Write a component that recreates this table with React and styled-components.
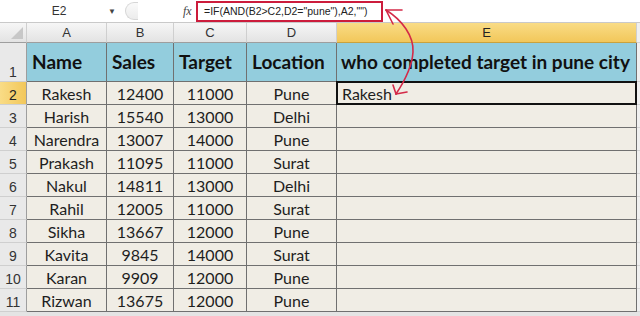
import React from 'react';
import styled, { createGlobalStyle, css } from 'styled-components';

const Global = createGlobalStyle`
    html, body {
        margin: 0;
        padding: 0;
        background: #ffffff;
        overflow: hidden;
    }
    body {
        font-family: Lato, "Open Sans", sans-serif;
    }
`;

const Page = styled.div`
    position: relative;
    width: 640px;
    height: 316px;
    background: #e4e4e4;
`;

const FormulaBar = styled.div`
    display: flex;
    align-items: center;
    height: 23px;
    background: #ffffff;
    border-bottom: 1px solid #c9c9c9;
    box-sizing: border-box;
`;

const NameBox = styled.div`
    width: 122px;
    height: 100%;
    display: flex;
    align-items: center;
    justify-content: space-between;
    padding: 0 6px 0 0;
    box-sizing: border-box;
    font-family: "Liberation Sans", Arial, sans-serif;
    font-size: 12px;
    color: #333;
`;

const NameText = styled.span`
    flex: 1;
    text-align: center;
    padding-left: 10px;
`;

const Caret = styled.span`
    font-size: 8px;
    color: #444;
`;

const Splitter = styled.div`
    width: 12px;
    height: 16px;
    border: 1px solid #d6d6d6;
    border-right: none;
    border-radius: 9px 0 0 9px;
    background: linear-gradient(#fafafa, #ececec);
    margin-left: 3px;
`;

const Fx = styled.span`
    margin-left: 45px;
    width: 12px;
    font-family: "Liberation Serif", serif;
    font-style: italic;
    font-size: 12px;
    color: #444;
`;

const FormulaBox = styled.div`
    margin-left: 1px;
    height: 21px;
    width: 187px;
    border: 2px solid #cc1c3c;
    box-sizing: border-box;
    display: flex;
    align-items: center;
    padding-left: 6px;
    font-family: "Liberation Sans", Arial, sans-serif;
    font-size: 10.5px;
    color: #222;
    white-space: nowrap;
`;

const Sheet = styled.div`
    display: grid;
    grid-template-columns: 27px 80px 67px 73px 90px 300px 1fr;
    grid-template-rows: 20px 39px repeat(10, 23px);
    background: #f0ede5;
`;

const ColHead = styled.div`
    display: flex;
    align-items: center;
    justify-content: center;
    font-family: "Liberation Sans", Arial, sans-serif;
    font-size: 13px;
    color: #333;
    background: linear-gradient(#f6f6f6, #e3e3e3);
    border-right: 1px solid #cfcfcf;
    border-bottom: 1px solid #9e9e9e;
    box-sizing: border-box;
    ${props => props.active && css`
        background: linear-gradient(#f9dc86, #f2c75a);
        border-bottom: 1px solid #c9a23e;
        color: #222;
    `}
`;

const Corner = styled(ColHead)`
    position: relative;
    &::after {
        content: '';
        position: absolute;
        right: 3px;
        bottom: 3px;
        border-left: 12px solid transparent;
        border-bottom: 12px solid #c7c7c7;
    }
`;

const RowHead = styled.div`
    display: flex;
    align-items: flex-end;
    justify-content: center;
    padding-bottom: 1px;
    font-family: "Liberation Sans", Arial, sans-serif;
    font-size: 14px;
    color: #333;
    background: #e9e9e9;
    border-right: 1px solid #9e9e9e;
    border-bottom: 1px solid #cfcfcf;
    box-sizing: border-box;
    ${props => props.active && css`
        background: linear-gradient(90deg, #f9dc86, #f2c75a);
        color: #222;
    `}
`;

const Cell = styled.div`
    display: flex;
    align-items: center;
    justify-content: ${ props => props.left ? 'flex-start' : 'center' };
    padding: ${ props => props.left ? '0 4px' : '0' };
    font-size: 16px;
    color: #1e1e1e;
    background: #f0ede5;
    border-right: 1px solid #707070;
    border-bottom: 1px solid #707070;
    box-sizing: border-box;
    white-space: nowrap;
    overflow: hidden;
`;

const HeadCell = styled(Cell)`
    align-items: flex-end;
    padding: ${ props => props.left ? '0 4px 8px' : '0 0 8px 5px' };
    justify-content: flex-start;
    font-size: 19px;
    font-weight: 700;
    color: #111;
    background: #93cddd;
`;

const SelectedCell = styled(Cell)`
    border: 2px solid #111;
    margin: -1px 0 0 -1px;
    padding-left: 4px;
`;

const Filler = styled.div`
    background: #f0f0f0;
    border-bottom: 1px solid #d4d4d4;
`;

const Arrow = styled.svg`
    position: absolute;
    left: 0;
    top: 0;
    pointer-events: none;
`;

const headers = ['Name', 'Sales', 'Target', 'Location', 'who completed target in pune city'];

const rows = [
    ['Rakesh', '12400', '11000', 'Pune', 'Rakesh'],
    ['Harish', '15540', '13000', 'Delhi', ''],
    ['Narendra', '13007', '14000', 'Pune', ''],
    ['Prakash', '11095', '11000', 'Surat', ''],
    ['Nakul', '14811', '13000', 'Delhi', ''],
    ['Rahil', '12005', '11000', 'Surat', ''],
    ['Sikha', '13667', '12000', 'Pune', ''],
    ['Kavita', '9845', '14000', 'Surat', ''],
    ['Karan', '9909', '12000', 'Pune', ''],
    ['Rizwan', '13675', '12000', 'Pune', ''],
];

const App = () => (
    <Page>
        <Global />
        <FormulaBar>
            <NameBox>
                <NameText>E2</NameText>
                <Caret>▼</Caret>
            </NameBox>
            <Splitter />
            <Fx>fx</Fx>
            <FormulaBox>=IF(AND(B2&gt;C2,D2="pune"),A2,"")</FormulaBox>
        </FormulaBar>
        <Sheet>
            <Corner />
            { ['A', 'B', 'C', 'D', 'E'].map(l => (
                <ColHead key = { l } active = { l === 'E' }>{ l }</ColHead>
            )) }
            <Filler />

            <RowHead>1</RowHead>
            { headers.map((h, i) => (
                <HeadCell key = { h } left = { i === 4 }>{ h }</HeadCell>
            )) }
            <Filler />

            { rows.map((r, ri) => (
                <React.Fragment key = { r[0] }>
                    <RowHead active = { ri === 0 }>{ ri + 2 }</RowHead>
                    { r.slice(0, 4).map((v, ci) => <Cell key = { ci }>{ v }</Cell>) }
                    { ri === 0
                        ? <SelectedCell left>{ r[4] }</SelectedCell>
                        : <Cell left>{ r[4] }</Cell> }
                    <Filler />
                </React.Fragment>
            )) }
        </Sheet>
        <Arrow width = "640" height = "316" viewBox = "0 0 640 316">
            <g fill = "none" stroke = "#d42a48" strokeWidth = "1.6" strokeLinecap = "round">
                <path d = "M386 10 C 402 20, 414 36, 413 52 C 412 68, 404 82, 396 94" />
                <path d = "M386 10 L 402 10" />
                <path d = "M386 10 L 393 24" />
                <path d = "M396 94 L 393 85" />
                <path d = "M396 94 L 407 92" />
            </g>
        </Arrow>
    </Page>
);

export default App;
